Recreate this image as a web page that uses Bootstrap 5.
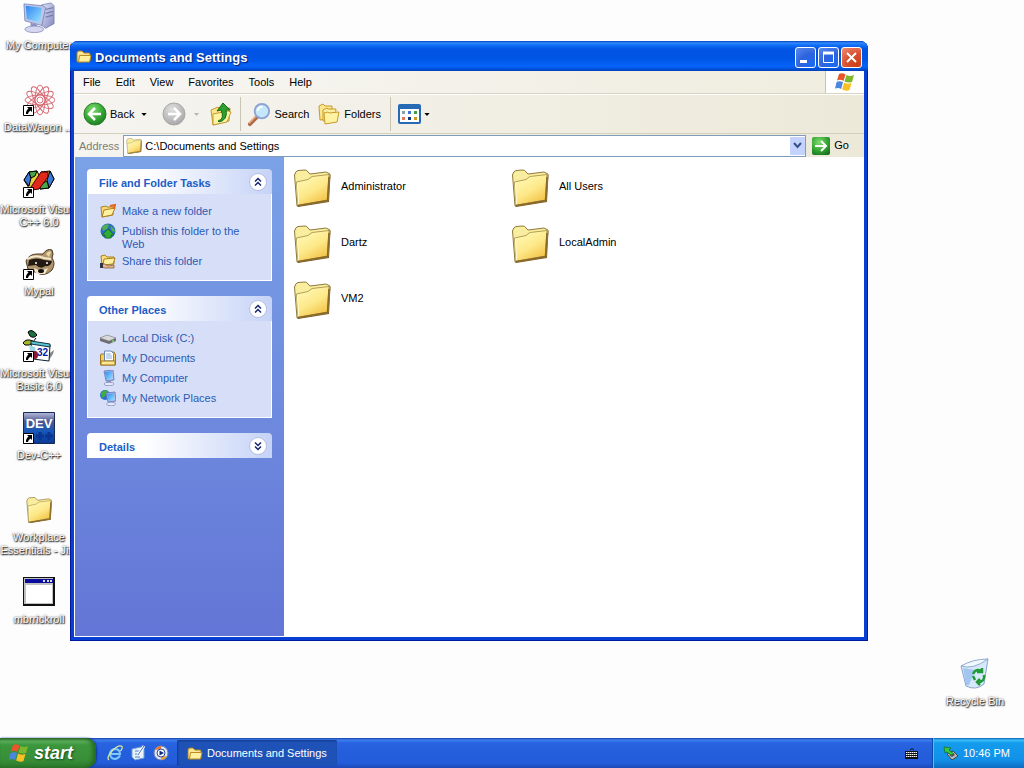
<!DOCTYPE html>
<html lang="en">
<head>
<meta charset="utf-8">
<meta name="viewport" content="width=device-width, initial-scale=1">
<title>Documents and Settings</title>
<link href="https://cdn.jsdelivr.net/npm/bootstrap@5.3.0/dist/css/bootstrap.min.css" rel="stylesheet">
<style>
:root { --ui: "Liberation Sans", sans-serif; }
body { font-family: var(--ui); font-size: 11px; line-height: 13px; background: #fdfdfd; color: #000; overflow: hidden; }
button { font: inherit; color: inherit; background: none; border: 0; padding: 0; }
svg { display: block; flex: none; }
a { text-decoration: none; color: inherit; }

/* desktop */
.desktop { position: relative; min-height: 0; }
.shortcut { width: 78px; height: 82px; padding-top: 2px; text-align: center; }
.shortcut svg { margin: 0 auto 5px; }
.shortcut span { color: #fff; text-shadow: 1px 1px 1px #333, 0 0 2px #555, 0 1px 2px #666; }
.bin { position: absolute; right: 10px; bottom: 0; }

/* explorer window */
.xp-window { position: absolute; left: 70px; top: 41px; right: 156px; bottom: 97px; background: #0a3fd4; border-radius: 8px 8px 0 0; padding: 0 4px 4px; box-shadow: inset 1px -1px 0 #0019a0, inset -1px 0 0 #0019a0; }
.titlebar { height: 30px; margin: 0 -4px; padding: 2px 6px 0; gap: 3px; border-radius: 8px 8px 0 0; background: linear-gradient(#0842c0 0, #2f8bff 2px, #1270f5 4px, #0254e3 8px, #0055e5 18px, #0664fa 25px, #0359e8 27px, #0140b8 30px); color: #fff; }
.titlebar h1 { padding-top: 2px; font-size: 13px; font-weight: bold; line-height: 16px; text-shadow: 1px 1px 1px #0a1f6e; }
.caption-group { gap: 2px; }
.caption-btn { width: 21px; height: 21px; border: 1px solid #fff; border-radius: 3px; background: radial-gradient(circle at 80% 90%, #1a6cf5, #2f63dc 50%, #5a8cf0); display: grid; place-items: center; }
.caption-close { background: radial-gradient(circle at 80% 90%, #cc4018, #d8502e 50%, #f09078); }
.menubar { height: 23px; background: linear-gradient(90deg, #f7f6f4, #efedde); border-bottom: 1px solid #d8d4c4; }
.menu-items { padding-left: 9px; gap: 15px; }
.throbber { width: 39px; background: #fff; border-left: 1px solid #c8c5b5; display: grid; place-items: center; }
.toolbar { height: 40px; background: linear-gradient(90deg, #f5f4f0, #ede9d9); border-top: 1px solid #fff; border-bottom: 1px solid #d4d0be; }
.toolbar > * { flex: none; }
.tool-back { margin-left: 9px; gap: 3px; }
.tool-fwd { margin-left: 15px; color: #b8b6ae; }
.tool-up { margin: 0 8px 0 11px; }
.tool-search { margin-left: 6px; gap: 3px; }
.tool-folders { margin: 0 9px 0 9px; gap: 4px; }
.tool-views { margin-left: 7px; gap: 3px; }
.rule { width: 1px; height: 34px; background: #c9c5b4; }
.addressbar { height: 23px; background: linear-gradient(90deg, #f5f4f0, #ede9d9); }
.addressbar label { color: #7f7c73; padding: 1px 4px 0 5px; }
.address-box { height: 22px; padding-left: 2px; gap: 3px; background: #fff; border: 1px solid #7f9db9; }
.address-box input { border: 0; outline: 0; padding: 2px 0 0; font: inherit; min-width: 0; }
.drop-btn { width: 15px; height: 18px; background: #c3d3fd; border-radius: 1px; display: grid; place-items: center; }
.go-btn { gap: 4px; margin: 0 15px 0 6px; }
.view-area { border-left: 1px solid #fff; border-bottom: 1px solid #fff; }

/* task pane */
.taskpane { width: 209px; padding: 12px; background: linear-gradient(#7ba2e7, #6375d6); gap: 15px; }
.pane-head { height: 25px; padding: 0 5px 0 12px; border-radius: 4px 4px 0 0; background: linear-gradient(90deg, #fff 30%, #c6d3f7); color: #215dc6; }
.pane-head h2 { padding-top: 3px; font-size: 11px; line-height: 13px; font-weight: bold; }
.pane-body { padding: 9px 12px 11px; border: 1px solid #fff; border-top: 0; background: #d6dff7; color: #2c5ab4; gap: 4px; }
.pane-body a { min-height: 16px; gap: 6px; }
.pane-body span { margin: 2px 0 -2px; }

/* files */
.filegrid { display: grid; grid-template-columns: repeat(auto-fill, 218px); gap: 20px 0; padding: 13px 0 0 9px; align-content: start; background: #fff; }
.filegrid a { gap: 10px; height: 36px; }
.filegrid span { padding-bottom: 4px; }

/* taskbar */
.taskbar { height: 30px; background: linear-gradient(#1941a5 0, #3b80f0 2px, #2a63e0 5px, #245edb 15px, #245ddb 25px, #1c48b4 30px); color: #fff; }
.start-btn { width: 96px; padding-left: 9px; border-radius: 0 10px 10px 0; background: linear-gradient(#2c6a2c 0, #5cae5c 3px, #3c973c 7px, #388e38 22px, #2c7a2c 30px); box-shadow: inset -3px 0 4px #23661f, 1px 0 2px #12389a; gap: 5px; font: italic bold 18px/20px var(--ui); text-shadow: 1px 1px 2px #1b4a1b; }
.quick { gap: 7px; padding: 0 8px 0 11px; }
.task-btn { width: 160px; height: 26px; padding: 1px 10px 0; gap: 4px; background: #1e52b7; border-radius: 2px; box-shadow: inset 1px 1px 2px #123a8c; }
.lang { padding-right: 14px; }
.tray { width: 92px; padding: 0 14px 0 10px; background: linear-gradient(#0c59b9 0, #3cc0f8 2px, #149bec 5px, #1290e9 22px, #0d6cc0 30px); border-left: 1px solid #0a4ea8; box-shadow: inset 1px 0 0 #45c4ff; }
</style>
</head>
<body class="vh-100 d-flex flex-column">

<svg width="0" height="0" class="position-absolute" aria-hidden="true">
  <defs>
    <linearGradient id="gFold" x1="0" y1="0" x2=".6" y2="1"><stop offset="0" stop-color="#fffbc0"/><stop offset=".6" stop-color="#fde98a"/><stop offset="1" stop-color="#f3c54a"/></linearGradient>
    <linearGradient id="gScreen" x1="0" y1="0" x2="1" y2="1"><stop offset="0" stop-color="#2f86f0"/><stop offset="1" stop-color="#9ae4ff"/></linearGradient>
    <linearGradient id="gCase" x1="0" y1="0" x2="1" y2="1"><stop offset="0" stop-color="#e6e8fb"/><stop offset="1" stop-color="#7f86bd"/></linearGradient>
    <radialGradient id="gGreen" cx=".4" cy=".3" r=".8"><stop offset="0" stop-color="#7fdc70"/><stop offset=".6" stop-color="#32a232"/><stop offset="1" stop-color="#17701c"/></radialGradient>
    <radialGradient id="gGrey" cx=".4" cy=".3" r=".8"><stop offset="0" stop-color="#e0e0e0"/><stop offset="1" stop-color="#a2a2a2"/></radialGradient>
    <linearGradient id="gDev" x1="0" y1="0" x2="0" y2="1"><stop offset="0" stop-color="#b8bcdc"/><stop offset=".3" stop-color="#4a5590"/><stop offset=".6" stop-color="#1658b8"/><stop offset="1" stop-color="#0a3a94"/></linearGradient>

    <symbol id="folder" viewBox="0 0 38 38">
      <path d="M4 37 34 32 36.500 6 37.500 6 36 33 5 38z" fill="#7a5c22"/>
      <path d="M1.500 6Q2.500 2 5 1.500L12 1Q14 1 15 3L17 5 33 3 37 5 35 32 4 37z" fill="#f9eda0" stroke="#8f7a3a" stroke-width="1"/>
      <path d="M3.500 13 15 10.500 19 7.500 36 5.500 34.500 31 5 36.500z" fill="url(#gFold)" stroke="#a28a40" stroke-width=".8"/>
      <path d="M4.500 14 5.500 35.500" stroke="#fffde0" stroke-width="1"/>
      <path d="M5 36.500 34.500 31.500 36 8" fill="none" stroke="#8a6828" stroke-width="1.500"/>
    </symbol>
    <symbol id="folderS" viewBox="0 0 16 16">
      <path d="M1 4Q1 2 3 2H6L8 4H13Q14 4 14 5V12L2 13Q1 13 1 12z" fill="#fde693" stroke="#a8801c"/>
      <path d="M3.500 6.500H15L13.500 13H2.500z" fill="#fff0a0" stroke="#b98c22"/>
    </symbol>
    <symbol id="link" viewBox="0 0 11 11">
      <path d="M.5.5h10v10H.5z" fill="#fff" stroke="#000"/><path d="M4 2h5v5L7.500 5.500Q5 7 5 9H3Q2.500 6 5.500 3.500z" fill="#000"/>
    </symbol>
    <symbol id="flag" viewBox="0 0 20 20">
      <path d="M4 2Q7 .5 10.500 2.500L8.500 9Q5.500 7 2 8.500z" fill="#e8562a"/><path d="M11.500 3Q15 5 19 3L17 10Q13 11 9.500 9.500z" fill="#7db82c"/>
      <path d="M1.700 9.700Q5 8.500 8 10L6.200 17Q3.500 15.500 0 16.500z" fill="#4a86e0"/><path d="M9 10.500Q12 12.500 16.500 11L14.500 18Q11 19.500 7.200 17.500z" fill="#f8c022"/>
    </symbol>
    <symbol id="monitor" viewBox="0 0 34 34">
      <path d="M20 3 30 1 33 4V23L24 28 19 24z" fill="url(#gCase)" stroke="#747cab" stroke-width=".8"/>
      <path d="M24 8 32 6M24 12 32 10M24 16 32 14" stroke="#747cab" stroke-width="1.300"/>
      <path d="M1 2 21 4 24 6 20 25 2 20z" fill="#c0c6ea" stroke="#6f78b0" stroke-width=".8"/>
      <path d="M3 4 20 6 18 22 4 18z" fill="url(#gScreen)"/>
      <path d="M8 22 15 24V27H8z" fill="#8d94c4"/><ellipse cx="12" cy="29" rx="10" ry="3.500" fill="#d4d7ef" stroke="#7f86b8" stroke-width=".8"/>
    </symbol>
    <symbol id="chevUp" viewBox="0 0 18 18"><circle cx="9" cy="9" r="8.500" fill="#fff" stroke="#b2bfe4"/><path d="M6 8.500 9 5.500 12 8.500M6 12.500 9 9.500 12 12.500" fill="none" stroke="#17256c" stroke-width="1.500"/></symbol>
    <symbol id="chevDown" viewBox="0 0 18 18"><circle cx="9" cy="9" r="8.500" fill="#fff" stroke="#b2bfe4"/><path d="M6 5.500 9 8.500 12 5.500M6 9.500 9 12.500 12 9.500" fill="none" stroke="#17256c" stroke-width="1.500"/></symbol>
    <symbol id="caret" viewBox="0 0 7 4"><path d="M0 0H7L3.500 4z" fill="currentColor"/></symbol>
  </defs>
</svg>

<main class="desktop flex-grow-1">
  <nav class="d-flex flex-column" aria-label="Desktop shortcuts">
    <a href="#" class="shortcut"><svg width="32" height="32"><use href="#monitor"/></svg><span>My Computer</span></a>
    <a href="#" class="shortcut"><svg width="32" height="32" viewBox="0 0 32 32">
      <g fill="none" stroke="#d4626c" stroke-width=".9"><circle cx="17" cy="16" r="3"/>
      <ellipse cx="17" cy="16" rx="15" ry="5"/><ellipse cx="17" cy="16" rx="15" ry="5" transform="rotate(30 17 16)"/><ellipse cx="17" cy="16" rx="15" ry="5" transform="rotate(60 17 16)"/><ellipse cx="17" cy="16" rx="15" ry="5" transform="rotate(90 17 16)"/><ellipse cx="17" cy="16" rx="15" ry="5" transform="rotate(120 17 16)"/><ellipse cx="17" cy="16" rx="15" ry="5" transform="rotate(150 17 16)"/></g>
      <use href="#link" y="21" width="11" height="11"/></svg><span>DataWagon ...</span></a>
    <a href="#" class="shortcut"><svg width="32" height="32" viewBox="0 0 32 32">
      <path d="M1 14 6 6 14 5 16 9 11 20 6 22z" fill="#e8d23a" stroke="#000"/><path d="M1 14 6 6 8 12 6 20z" fill="#3b78d8" stroke="#000"/><path d="M6 6 14 5 12 10 8 12z" fill="#4aa64a" stroke="#000"/>
      <path d="M18 6 27 5 31 13 26 22 17 23 14 20z" fill="#f0df4a" stroke="#000"/><path d="M27 5 31 13 26 22 24 14z" fill="#3b78d8" stroke="#000"/><path d="M26 22 17 23 18 18 24 15z" fill="#4aa64a" stroke="#000"/>
      <path d="M8 21 18 6 25 6 25 11 16 23 9 24z" fill="#e0291c" stroke="#400"/><use href="#link" y="21" width="11" height="11"/></svg><span>Microsoft Visual C++ 6.0</span></a>
    <a href="#" class="shortcut"><svg width="32" height="32" viewBox="0 0 32 32">
      <path d="M3 13Q6 6 14 6L20 6Q24 0 29 2Q31 6 29 10Q33 15 29 22Q22 29 14 25L5 21z" fill="#b0956c" stroke="#4a3824"/>
      <path d="M23 6Q26 2 28 4L26 9z" fill="#e8d5a8"/><path d="M6 12Q14 9 21 12L29 13Q28 19 22 18Q18 22 13 17L5 18z" fill="#241a14"/>
      <path d="M4 11Q12 6 21 10L28 11" fill="none" stroke="#f4e8cc" stroke-width="2"/><path d="M11 20Q17 24 25 20L22 26H13z" fill="#f2e6cf"/><circle cx="13" cy="15" r="1" fill="#fff"/><circle cx="24" cy="15" r="1" fill="#fff"/><ellipse cx="18" cy="23" rx="3" ry="2" fill="#111"/>
      <use href="#link" y="21" width="11" height="11"/></svg><span>Mypal</span></a>
    <a href="#" class="shortcut"><svg width="32" height="32" viewBox="0 0 32 32">
      <path d="M20 28 31 20 30 24 26 30H12z" fill="#888"/><path d="M5 2Q9-2 14 5Q11 9 7 6z" fill="#1e7040" stroke="#000"/><path d="M0 13Q3 8 10 11L7 15H2z" fill="#a8b428" stroke="#000"/><path d="M10 12 13 8" stroke="#000"/>
      <path d="M8 13 27 15 26 31 10 29z" fill="#fff" stroke="#123"/><path d="M8 11 27 14V17L8 14z" fill="#59c4cf" stroke="#134"/><path d="M6 15 12 17 13 24 8 26z" fill="#9fd6e4"/><ellipse cx="12" cy="25" rx="3" ry="4" fill="#8a1734"/>
      <text x="14" y="26" font-size="10" font-weight="bold" fill="#0a1a9c">32</text><use href="#link" y="21" width="11" height="11"/></svg><span>Microsoft Visual Basic 6.0</span></a>
    <a href="#" class="shortcut"><svg width="32" height="32" viewBox="0 0 32 32">
      <path d="M.5.5h31v31H.5z" fill="url(#gDev)" stroke="#142a58"/><text x="16" y="16" text-anchor="middle" font-size="13" font-weight="bold" fill="#fff">DEV</text>
      <path d="M13 24h8M17 20v8M22 24h8M26 20v8" stroke="#0a3590" stroke-width="3"/><use href="#link" y="21" width="11" height="11"/></svg><span>Dev-C++</span></a>
    <a href="#" class="shortcut"><svg width="32" height="32" viewBox="-4 -4 46 46"><use href="#folder" width="38" height="38"/></svg><span>Workplace Essentials - Ji...</span></a>
    <a href="#" class="shortcut"><svg width="32" height="32" viewBox="0 0 32 32">
      <path d="M0 1H32V30H0z" fill="#111"/><path d="M1 2H30V28H1z" fill="#c0c0c0"/><path d="M2 3H30V7H2z" fill="#0a0a9c"/><path d="M20 4h2v2h-2zM24 4h2v2h-2zM27 4h2v2h-2z" fill="#ddd"/><path d="M3 9H29V27H3z" fill="#fff"/></svg><span>mbrrickroll</span></a>
  </nav>

  <section class="xp-window d-flex flex-column">
    <header class="titlebar d-flex align-items-center">
      <svg width="16" height="16"><use href="#folderS"/></svg>
      <h1 class="m-0 flex-grow-1">Documents and Settings</h1>
      <div class="d-flex caption-group">
        <button class="caption-btn" aria-label="Minimize"><svg width="13" height="13"><path d="M1 9h7v3H1z" fill="#fff"/></svg></button>
        <button class="caption-btn" aria-label="Maximize"><svg width="13" height="13"><path d="M1 2h11" stroke="#fff" stroke-width="3"/><path d="M1.500 1.500h10v10h-10z" fill="none" stroke="#fff"/></svg></button>
        <button class="caption-btn caption-close" aria-label="Close"><svg width="13" height="13"><path d="M2 2 11 11M11 2 2 11" stroke="#fff" stroke-width="2"/></svg></button>
      </div>
    </header>

    <div class="menubar d-flex">
      <div class="d-flex align-items-center flex-grow-1 menu-items">
        <button>File</button><button>Edit</button><button>View</button><button>Favorites</button><button>Tools</button><button>Help</button>
      </div>
      <div class="throbber"><svg width="20" height="20"><use href="#flag"/></svg></div>
    </div>

    <div class="toolbar d-flex align-items-center">
      <button class="d-flex align-items-center tool-back"><svg width="24" height="24" viewBox="0 0 24 24"><circle cx="12" cy="12" r="11" fill="url(#gGreen)" stroke="#2a7d2a"/><path d="M12 6 6 12 12 18M6 12H18" fill="none" stroke="#fff" stroke-width="2.500"/></svg>Back<svg width="6" height="3" class="ms-1"><use href="#caret"/></svg></button>
      <button class="d-flex align-items-center tool-fwd" aria-label="Forward" disabled><svg width="24" height="24" viewBox="0 0 24 24"><circle cx="12" cy="12" r="11" fill="url(#gGrey)" stroke="#a8a8a8"/><path d="M12 6 18 12 12 18M18 12H6" fill="none" stroke="#fff" stroke-width="2.500"/></svg><svg width="5" height="3" class="ms-2"><use href="#caret"/></svg></button>
      <button class="tool-up" aria-label="Up"><svg width="22" height="24" viewBox="0 0 22 24"><path d="M1 8 8 5 10 7 20 6 19 19 3 23z" fill="#fbe68a" stroke="#c39a30"/><path d="M3 12 18 9 21 10 17 20 3 23z" fill="#fff3a4" stroke="#c39a30"/><path d="M8 19Q15 17 11 8L7 9 13 1 20 8 16 8Q18 18 9 20z" fill="#2da12d" stroke="#156c18"/></svg></button>
      <div class="rule"></div>
      <button class="d-flex align-items-center tool-search"><svg width="24" height="25" viewBox="0 0 25 26"><path d="M3 23 11 15" stroke="#b06a4a" stroke-width="4" stroke-linecap="round"/><path d="M2 22 9 15" stroke="#eab58c" stroke-width="1.500"/><circle cx="15.500" cy="9.500" r="7.500" fill="#c5e7fb" stroke="#90a4d2" stroke-width="2"/><path d="M11 9Q12 5 16 5" stroke="#fff" stroke-width="2" fill="none"/></svg>Search</button>
      <button class="d-flex align-items-center tool-folders"><svg width="22" height="22" viewBox="0 0 22 22"><path d="M1 3 5 1 7 3H14V15L2 17z" fill="#fce88c" stroke="#c79a2e"/><path d="M5 7 9 5 10 6 18 6 17 16 5 18z" fill="#fdeea0" stroke="#c79a2e"/><path d="M6 10 10 9 11 10 21 9 19 19 7 21z" fill="#fff2a0" stroke="#c79a2e"/></svg>Folders</button>
      <div class="rule"></div>
      <button class="d-flex align-items-center tool-views" aria-label="Views"><svg width="23" height="20" viewBox="0 0 23 20"><rect x="1" y="1" width="21" height="18" rx="1" fill="#fff" stroke="#2669b4" stroke-width="2"/><path d="M1 1H22V5H1z" fill="#2669b4"/><path d="M4 7h3v3H4z" fill="#8c9cb8"/><path d="M10 7h3v3h-3z" fill="#3a78d8"/><path d="M16 7h3v3h-3z" fill="#3f9c48"/><path d="M4 13h3v3H4z" fill="#e0785a"/><path d="M10 13h3v3h-3z" fill="#17347c"/><path d="M16 13h3v3h-3z" fill="#c89a20"/></svg><svg width="6" height="3"><use href="#caret"/></svg></button>
    </div>

    <div class="addressbar d-flex align-items-center">
      <label for="path">Address</label>
      <div class="address-box d-flex align-items-center flex-grow-1">
        <svg width="16" height="16" viewBox="0 0 38 38"><use href="#folder" width="38" height="38"/></svg>
        <input id="path" class="flex-grow-1" value="C:\Documents and Settings">
        <button class="drop-btn" aria-label="Show addresses"><svg width="9" height="7"><path d="M1 1 4.500 5 8 1" fill="none" stroke="#3a4f8c" stroke-width="2"/></svg></button>
      </div>
      <button class="d-flex align-items-center go-btn"><svg width="18" height="18" viewBox="0 0 18 18"><rect width="18" height="18" rx="2" fill="url(#gGreen)"/><path d="M3 9H14M9 4 14 9 9 14" fill="none" stroke="#fff" stroke-width="2"/></svg>Go</button>
    </div>

    <div class="view-area d-flex flex-grow-1">
      <aside class="taskpane d-flex flex-column flex-shrink-0">
        <section>
          <div class="pane-head d-flex align-items-center justify-content-between"><h2 class="m-0">File and Folder Tasks</h2><button aria-label="Collapse"><svg width="18" height="18"><use href="#chevUp"/></svg></button></div>
          <div class="pane-body d-flex flex-column">
            <a href="#" class="d-flex"><svg width="16" height="16" viewBox="0 0 16 16"><path d="M1 4 6 3 7 4H13V12L2 14z" fill="#f8d878" stroke="#b08020"/><path d="M4 7 15 5 12 12 2 14z" fill="#fff1a0" stroke="#b08020"/><path d="M10 3 15 2 14 6" fill="none" stroke="#e0661c" stroke-width="2"/></svg><span>Make a new folder</span></a>
            <a href="#" class="d-flex"><svg width="16" height="16" viewBox="0 0 16 16"><circle cx="8" cy="8" r="7.500" fill="#2b6ec0"/><path d="M2 4Q6 0 9 2L7 6 3 8zM10 3Q15 5 15 9L12 8z" fill="#52b050"/><path d="M8 6 14 12H11V15H5V12H2z" fill="#2fae35" stroke="#116018" stroke-width=".7"/></svg><span>Publish this folder to the Web</span></a>
            <a href="#" class="d-flex"><svg width="16" height="16" viewBox="0 0 16 16"><path d="M1 3 5 2 7 4H14V11L2 12z" fill="#fbe07c" stroke="#a98022"/><path d="M4 6 15 5 13 11 3 12z" fill="#fff1a0" stroke="#a98022"/><path d="M1 11H5L8 13 14 12V15H5L1 14z" fill="#e8b98c" stroke="#7a4a26" stroke-width=".7"/><path d="M0 10h3v5H0z" fill="#334"/></svg><span>Share this folder</span></a>
          </div>
        </section>
        <section>
          <div class="pane-head d-flex align-items-center justify-content-between"><h2 class="m-0">Other Places</h2><button aria-label="Collapse"><svg width="18" height="18"><use href="#chevUp"/></svg></button></div>
          <div class="pane-body d-flex flex-column">
            <a href="#" class="d-flex"><svg width="16" height="16" viewBox="0 0 16 16"><path d="M0 8 7 5 16 8V11L9 14 0 11z" fill="#6d6d72"/><path d="M0 8 7 5 16 8 9 11z" fill="#d9d9dd" stroke="#86868c" stroke-width=".6"/><circle cx="13" cy="11" r="1" fill="#6fdc60"/></svg><span>Local Disk (C:)</span></a>
            <a href="#" class="d-flex"><svg width="16" height="16" viewBox="0 0 16 16"><path d="M.5 5Q.5 4 2 4H5V2H14L15.500 5V15H.5z" fill="#f4cf60" stroke="#9c7620"/><path d="M4.500 1H11L13.500 3.500V11H4.500z" fill="#fff" stroke="#6a86b8"/><path d="M6 4H11M6 6H12M6 8H12" stroke="#8cacdc"/><path d="M1 11H15V15H1z" fill="#fde88f" stroke="#9c7620"/></svg><span>My Documents</span></a>
            <a href="#" class="d-flex"><svg width="16" height="16" viewBox="0 0 16 16"><path d="M4 1 13 0 14 10 6 11z" fill="#a9bbe8" stroke="#6474b0" stroke-width=".8"/><path d="M5 2 12 1 12.500 9 6.500 10z" fill="url(#gScreen)"/><path d="M7 10h4v3H7z" fill="#8a94c4"/><ellipse cx="9" cy="14" rx="5" ry="1.800" fill="#e4e8f8" stroke="#7584b8" stroke-width=".7"/></svg><span>My Computer</span></a>
            <a href="#" class="d-flex"><svg width="16" height="16" viewBox="0 0 16 16"><circle cx="5" cy="5" r="5" fill="#2f6ed0"/><path d="M1 3Q4-1 8 1L5 6 2 8z" fill="#3fae40"/><path d="M6 3 15 2 16 11 8 12z" fill="#a9bbe8" stroke="#6474b0" stroke-width=".8"/><path d="M7 4 14 3 14.500 10 8.500 11z" fill="url(#gScreen)"/><ellipse cx="11" cy="14" rx="4.500" ry="1.800" fill="#e4e8f8" stroke="#7584b8" stroke-width=".7"/></svg><span>My Network Places</span></a>
          </div>
        </section>
        <section>
          <div class="pane-head d-flex align-items-center justify-content-between"><h2 class="m-0">Details</h2><button aria-label="Expand"><svg width="18" height="18"><use href="#chevDown"/></svg></button></div>
        </section>
      </aside>
      <div class="filegrid flex-grow-1">
        <a href="#" class="d-flex align-items-center"><svg width="38" height="38"><use href="#folder"/></svg><span>Administrator</span></a>
        <a href="#" class="d-flex align-items-center"><svg width="38" height="38"><use href="#folder"/></svg><span>All Users</span></a>
        <a href="#" class="d-flex align-items-center"><svg width="38" height="38"><use href="#folder"/></svg><span>Dartz</span></a>
        <a href="#" class="d-flex align-items-center"><svg width="38" height="38"><use href="#folder"/></svg><span>LocalAdmin</span></a>
        <a href="#" class="d-flex align-items-center"><svg width="38" height="38"><use href="#folder"/></svg><span>VM2</span></a>
      </div>
    </div>
  </section>

  <a href="#" class="shortcut bin"><svg width="32" height="32" viewBox="0 0 32 32"><path d="M2 8Q16 4 29 1L25 26Q17 33 7 28z" fill="#cfe4f8" fill-opacity=".85" stroke="#8aa6cc"/><path d="M2 8Q14 12 29 1Q14 1 2 8z" fill="#f2f8ff" stroke="#90acd0"/><path d="M4 10 16 12 10 27 7 27z" fill="#8db8ec" opacity=".7"/><path d="M14 16Q17 10 22 13M23 10V14H18M25 17Q26 24 19 24M21 21 18 24 21 27M14 18 16 22" fill="none" stroke="#1f9a34" stroke-width="2.500"/></svg><span>Recycle Bin</span></a>
</main>

<footer class="taskbar d-flex align-items-stretch flex-shrink-0">
  <button class="start-btn d-flex align-items-center"><svg width="20" height="20"><use href="#flag"/></svg>start</button>
  <div class="d-flex align-items-center quick">
    <a href="#" aria-label="Internet Explorer"><svg width="16" height="16" viewBox="0 0 16 16"><path d="M13 10.500Q11 14 7.500 14Q3 13 3 8.500Q4 4 8.500 4Q13 4.500 13 9H4" fill="none" stroke="#7cc8ff" stroke-width="2"/><path d="M2 15Q-1 13 5 6Q12-1 15 1.500Q16 3 13.500 6" fill="none" stroke="#d6eaa0" stroke-width="1.200"/></svg></a>
    <a href="#" aria-label="Show Desktop"><svg width="16" height="16" viewBox="0 0 16 16"><path d="M2 4 11 2 14 4V13L5 15 2 12z" fill="#e8f0fb" stroke="#6fa0d8"/><path d="M5 6H11M5 9H8M5 12H10" stroke="#4a84c4"/><path d="M8 10 14 1" stroke="#fff" stroke-width="3"/><path d="M8 10 14 1" stroke="#3a70b8" stroke-width="1"/></svg></a>
    <a href="#" aria-label="Media Player"><svg width="16" height="16" viewBox="0 0 16 16"><circle cx="8" cy="8" r="7" fill="#dfe6f6" stroke="#6c80b0"/><path d="M2 5Q4 1 8 1V4z" fill="#f0782c"/><path d="M14 11Q12 15 8 15V12z" fill="#e8a030"/><circle cx="8" cy="8" r="4" fill="#fff" stroke="#2a4a9c"/><path d="M6.500 5.500 11 8 6.500 10.500z" fill="#122a7c"/></svg></a>
  </div>
  <button class="task-btn d-flex align-items-center align-self-center"><svg width="16" height="16"><use href="#folderS"/></svg>Documents and Settings</button>
  <div class="d-flex align-items-center ms-auto lang"><svg width="13" height="12" viewBox="0 0 13 12"><path d="M5 3Q7 0 9 3" fill="none" stroke="#111"/><path d="M0 4H13V12H0z" fill="#111"/><path d="M1 5.500H12M1 7.500H12M1 9.500H12" stroke="#fff" stroke-dasharray="1.500 .5"/></svg></div>
  <div class="tray d-flex align-items-center justify-content-between"><svg width="15" height="16" viewBox="0 0 15 16"><path d="M4 9 10 6 15 11 9 15z" fill="#b8bcc4" stroke="#444"/><path d="M6 10 10 8 12 10 9 12z" fill="#555"/><path d="M1 2 8 3 6 5 11 9 8 10 4 7 2 8z" fill="#37c83c" stroke="#136a18" stroke-width=".7"/></svg><span>10:46 PM</span></div>
</footer>

<script src="https://cdn.jsdelivr.net/npm/bootstrap@5.3.0/dist/js/bootstrap.bundle.min.js"></script>
</body>
</html>
